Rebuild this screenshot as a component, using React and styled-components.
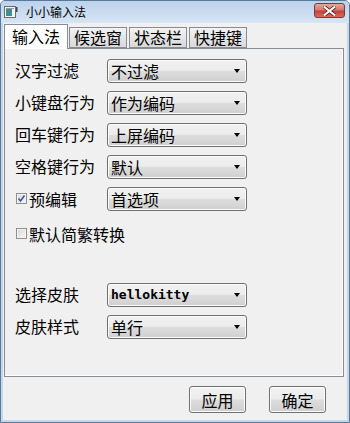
import React, { useState } from 'react'
import styled, { createGlobalStyle } from 'styled-components'

const GlobalStyle = createGlobalStyle`
  html, body {
    margin: 0;
    padding: 0;
    background: #ffffff;
  }
  body {
    font-family: 'Noto Sans CJK SC', 'Noto Sans', sans-serif;
    color: #000;
  }
`

const Window = styled.div`
  box-sizing: border-box;
  width: 350px;
  height: 423px;
  display: flex;
  flex-direction: column;
  border: 1px solid #5a7898;
  border-radius: 5px 5px 0 0;
  background: #c3d6ec;
  padding: 0 2px 2px 2px;
  overflow: hidden;
`

const TitleBar = styled.div`
  height: 22px;
  display: flex;
  align-items: center;
  padding: 0 2px 0 3px;
  margin: 0 -2px;
  background: linear-gradient(#bcd3ec, #d7e5f4);
`

const TitleText = styled.span`
  margin-left: 8px;
  font-size: 12px;
  line-height: 22px;
  flex: 1;
`

const CloseButton = styled.div`
  box-sizing: border-box;
  width: 31px;
  height: 15px;
  margin-top: -3px;
  margin-right: 2px;
  display: flex;
  align-items: center;
  justify-content: center;
  border: 1px solid #7b3a3a;
  border-radius: 3px;
  background: linear-gradient(#e8a79c 0%, #d57a6e 45%, #c4433a 55%, #d66b5f 100%);
`

const Client = styled.div`
  flex: 1;
  display: flex;
  flex-direction: column;
  background: #f0f0f0;
  padding: 1px 3px 6px 1px;
`

const TabBar = styled.div`
  display: flex;
  align-items: flex-end;
  height: 24px;
  position: relative;
  z-index: 1;
`

const Tab = styled.div`
  box-sizing: border-box;
  height: ${({ $active }) => ($active ? '25px' : '21px')};
  margin-bottom: ${({ $active }) => ($active ? '-1px' : '0')};
  margin-right: ${({ $gap }) => $gap}px;
  padding: 0 ${({ $active }) => ($active ? '7px' : '4px')};
  border: 1px solid #898c95;
  border-bottom: ${({ $active }) => ($active ? 'none' : '1px solid #898c95')};
  background: ${({ $active }) =>
    $active ? '#ffffff' : 'linear-gradient(#f3f3f3, #e6e6e6 50%, #d9d9d9)'};
  font-size: 16px;
  line-height: ${({ $active }) => ($active ? '23px' : '19px')};
  white-space: nowrap;
`

const Pane = styled.div`
  box-sizing: border-box;
  height: 329px;
  border: 1px solid #898c95;
  background: #f0f0f0;
  box-shadow: inset -1px -1px 0 #ffffff;
  padding: 10px 0 0 10px;
  display: flex;
  flex-direction: column;
  gap: 8px;
`

const Row = styled.div`
  display: flex;
  align-items: flex-start;
  height: 24px;
  margin-top: ${({ $extra }) => $extra || 0}px;
`

const Label = styled.div`
  width: 92px;
  font-size: 16px;
  line-height: 22px;
  white-space: nowrap;
`

const CheckLabel = styled.label`
  display: flex;
  align-items: center;
  width: ${({ $wide }) => ($wide ? 'auto' : '92px')};
  height: 24px;
  padding-left: 1px;
  box-sizing: border-box;
  font-size: 16px;
  white-space: nowrap;
`

const Box = styled.span`
  box-sizing: border-box;
  width: 11px;
  height: 11px;
  margin-right: 2px;
  margin-top: -2px;
  border: 1px solid #8e8f8f;
  background: linear-gradient(135deg, #d8d8d8, #f7f7f7);
  box-shadow: inset 0 0 0 1px #f4f4f4;
  display: flex;
  align-items: center;
  justify-content: center;
`

const Combo = styled.div`
  box-sizing: border-box;
  width: 140px;
  height: 24px;
  display: flex;
  align-items: center;
  padding: 0 6px 0 3px;
  border: 1px solid #707070;
  border-radius: 3px;
  background: linear-gradient(#f2f2f2 0%, #ebebeb 48%, #dddddd 52%, #cfcfcf 100%);
  box-shadow: inset 0 0 0 1px #fbfbfb;
`

const ComboText = styled.span`
  flex: 1;
  font-size: ${({ $mono }) => ($mono ? '13px' : '16px')};
  font-family: ${({ $mono }) =>
    $mono ? "'DejaVu Sans Mono', 'Liberation Mono', monospace" : 'inherit'};
  font-weight: ${({ $mono }) => ($mono ? 700 : 400)};
  line-height: 22px;
  white-space: nowrap;
`

const Arrow = styled.span`
  width: 0;
  height: 0;
  border-left: 3.5px solid transparent;
  border-right: 3.5px solid transparent;
  border-top: 4px solid #000;
`

const ButtonRow = styled.div`
  display: flex;
  justify-content: flex-end;
  gap: 23px;
  margin-top: 9px;
  padding-right: 18px;
`

const Button = styled.button`
  box-sizing: border-box;
  width: 57px;
  height: 27px;
  padding: 0;
  border: 1px solid #707070;
  border-radius: 3px;
  background: linear-gradient(#f2f2f2 0%, #ebebeb 48%, #dddddd 52%, #cfcfcf 100%);
  box-shadow: inset 0 0 0 1px #fcfcfc;
  font-family: inherit;
  font-size: 16px;
  color: #000;
`

function AppIcon() {
  return (
    <svg width='14' height='13' viewBox='0 0 14 13'>
      <rect x='0.5' y='0.5' width='11' height='11' fill='#f4f4f4' stroke='#6b6b6b' />
      <rect x='2' y='3' width='6' height='7' fill='#3f8f8f' />
      <rect x='2' y='2' width='8' height='1' fill='#9a9a9a' />
      <rect x='12' y='1' width='1.5' height='5' fill='#444' />
    </svg>
  )
}

function CloseIcon() {
  return (
    <svg width='13' height='10' viewBox='0 0 13 10'>
      <path
        d='M1.5 1 L11.5 9 M11.5 1 L1.5 9'
        stroke='#5a2020'
        strokeWidth='3.6'
        strokeLinecap='square'
      />
      <path
        d='M1.5 1 L11.5 9 M11.5 1 L1.5 9'
        stroke='#ffffff'
        strokeWidth='2'
        strokeLinecap='square'
      />
    </svg>
  )
}

function Check() {
  return (
    <svg width='9' height='9' viewBox='0 0 9 9'>
      <path d='M1.5 4.5 L3.5 7 L7.5 1.5' fill='none' stroke='#3c5a9a' strokeWidth='1.6' />
    </svg>
  )
}

function ComboBox({ value, mono }) {
  return (
    <Combo>
      <ComboText $mono={mono}>{value}</ComboText>
      <Arrow />
    </Combo>
  )
}

const tabs = [
  { name: '输入法', gap: 1 },
  { name: '候选窗', gap: 2 },
  { name: '状态栏', gap: 2 },
  { name: '快捷键', gap: 0 },
]

export default function App() {
  const [activeTab, setActiveTab] = useState(0)

  return (
    <>
      <GlobalStyle />
      <Window>
        <TitleBar>
          <AppIcon />
          <TitleText>小小输入法</TitleText>
          <CloseButton>
            <CloseIcon />
          </CloseButton>
        </TitleBar>
        <Client>
          <TabBar>
            {tabs.map((tab, i) => (
              <Tab key={tab.name} $active={i === activeTab} $gap={tab.gap} onClick={() => setActiveTab(i)}>
                {tab.name}
              </Tab>
            ))}
          </TabBar>
          <Pane>
            <Row>
              <Label>汉字过滤</Label>
              <ComboBox value='不过滤' />
            </Row>
            <Row>
              <Label>小键盘行为</Label>
              <ComboBox value='作为编码' />
            </Row>
            <Row>
              <Label>回车键行为</Label>
              <ComboBox value='上屏编码' />
            </Row>
            <Row>
              <Label>空格键行为</Label>
              <ComboBox value='默认' />
            </Row>
            <Row>
              <CheckLabel>
                <Box>
                  <Check />
                </Box>
                预编辑
              </CheckLabel>
              <ComboBox value='首选项' />
            </Row>
            <Row $extra={3}>
              <CheckLabel $wide>
                <Box />
                默认简繁转换
              </CheckLabel>
            </Row>
            <Row $extra={29}>
              <Label>选择皮肤</Label>
              <ComboBox value='hellokitty' mono />
            </Row>
            <Row>
              <Label>皮肤样式</Label>
              <ComboBox value='单行' />
            </Row>
          </Pane>
          <ButtonRow>
            <Button>应用</Button>
            <Button>确定</Button>
          </ButtonRow>
        </Client>
      </Window>
    </>
  )
}
